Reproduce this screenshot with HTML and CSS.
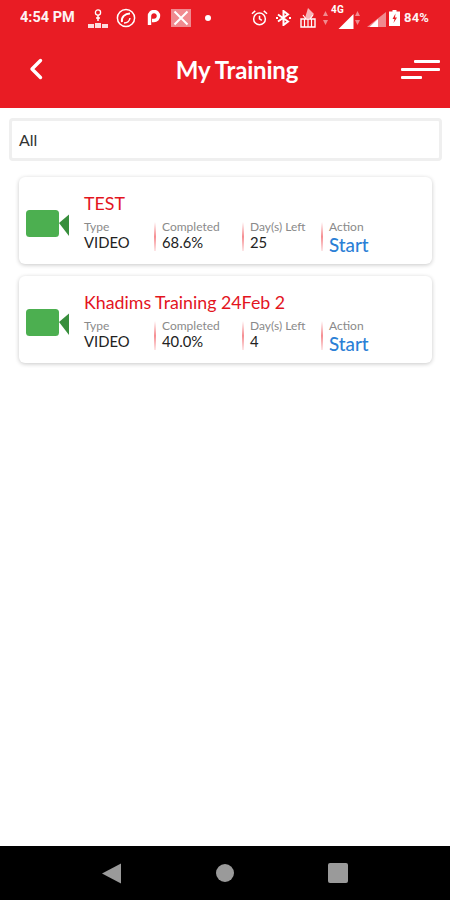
FILE: index.html
```html
<!DOCTYPE html>
<html lang="en">
<head>
<meta charset="utf-8">
<title>My Training</title>
<link rel="stylesheet" href="styles.css">
</head>
<body>
<div class="app">
  <header class="header">
    <div class="status">
      <div class="status-left">
        <span class="time">4:54 PM</span>
        <svg class="si net" viewBox="0 0 20 20"><circle cx="10" cy="4.500" r="2.600" fill="none" stroke="#fff" stroke-width="1.300"/><path d="M10 7v6M8 10h4" stroke="#fff" stroke-width="1.500"/><path d="M0 16h6v4H0zM7 15h6v5H7zM14 16h6v4h-6z" fill="#fff" fill-opacity=".85"/></svg>
        <svg class="si circ" viewBox="0 0 20 20"><circle cx="10" cy="10" r="8.600" fill="none" stroke="#fff" stroke-width="1.500"/><path d="M6 14c-1-5 3-8.500 8-8.500" fill="none" stroke="#fff" stroke-width="2"/><path d="M8 15c3 0 5.500-2 6-5" fill="none" stroke="#fff" stroke-width="1.500"/></svg>
        <svg class="si pp" viewBox="0 0 14 16"><path d="M2.500 15V6a4.500 4.500 0 1 1 4.500 4.500H5" fill="none" stroke="#fff" stroke-width="3.400"/></svg>
        <svg class="si xb" viewBox="0 0 20 18"><rect width="20" height="18" fill="#f08a8f"/><path d="M3.500 2.500l13 13M16.500 2.500l-13 13" stroke="#fff" stroke-width="2"/></svg>
        <span class="dot"></span>
      </div>
      <div class="status-right">
        <svg class="si alarm" viewBox="0 0 18 18"><circle cx="9" cy="10" r="6.200" fill="none" stroke="#fff" stroke-width="1.600"/><path d="M9 6.500V10l2.500 1.500M1 4.500L4.500 1.500M17 4.500l-3.500-3" fill="none" stroke="#fff" stroke-width="1.600"/></svg>
        <svg class="si bt" viewBox="0 0 15 16"><path d="M2 4.500l10 7-4.500 3.500v-14L12 4.500l-10 7" fill="none" stroke="#fff" stroke-width="2"/><path d="M0 8h2M13 8h2" stroke="#fff" stroke-width="2"/></svg>
        <svg class="si wifi" viewBox="0 0 16 20"><path d="M8 0l6 6-3 4H5z" fill="#f7b5b8"/><path d="M1 11h14v8H1z" fill="none" stroke="#fff" stroke-width="1.400"/><path d="M4.500 11v8M8 11v8M11.500 11v8M3 7l3 4M13 7l-3 4" stroke="#fff" stroke-width="1.200"/></svg>
        <svg class="si arrows" viewBox="0 0 5 14"><path d="M2.500 0l2.500 5H0zM2.500 14L0 9h5z" fill="#f08a8f"/></svg>
        <span class="sig4g">
          <span class="lte">4G</span>
          <svg class="si s1" viewBox="0 0 16 16"><path d="M16 0v16H0z" fill="#fff"/></svg>
        </span>
        <svg class="si arrows a2" viewBox="0 0 5 14"><path d="M2.500 0l2.500 5H0zM2.500 14L0 9h5z" fill="#f08a8f"/></svg>
        <svg class="si s2" viewBox="0 0 19 15"><path d="M19 0v15H0z" fill="#f08a8f"/><path d="M11 7v8H2.500z" fill="#fff"/></svg>
        <svg class="si batt" viewBox="0 0 11 16"><path d="M3.500 0h4v1.500H11V16H0V1.500h3.500z" fill="#fff"/><path d="M6.500 3.500L3.500 9h2l-1 4 3.500-5.500H6z" fill="#e91c24"/></svg>
        <span class="pct">84%</span>
      </div>
    </div>
    <div class="titlebar">
      <svg class="back" viewBox="0 0 14 22"><path d="M11.500 2.500L3 11l8.500 8.500" fill="none" stroke="#fff" stroke-width="3.400" stroke-linecap="round" stroke-linejoin="round"/></svg>
      <h1 class="title">My Training</h1>
      <div class="menu">
        <span class="bar b1"></span>
        <span class="bar b2"></span>
        <span class="bar b3"></span>
      </div>
    </div>
  </header>

  <main class="content">
    <div class="select">All</div>

    <section class="card">
      <svg class="cam" viewBox="0 0 43 27"><rect width="33" height="27" rx="3.500" fill="#4caf50"/><path d="M33 13l10-8.500V26z" fill="#388e3c"/></svg>
      <div class="info">
        <div class="name">TEST</div>
        <div class="cols">
          <div class="col c1"><span class="lab">Type</span><span class="val">VIDEO</span></div>
          <div class="col c2"><span class="lab">Completed</span><span class="val">68.6%</span></div>
          <div class="col c3"><span class="lab">Day(s) Left</span><span class="val">25</span></div>
          <div class="col c4"><span class="lab">Action</span><span class="start">Start</span></div>
        </div>
      </div>
    </section>

    <section class="card">
      <svg class="cam" viewBox="0 0 43 27"><rect width="33" height="27" rx="3.500" fill="#4caf50"/><path d="M33 13l10-8.500V26z" fill="#388e3c"/></svg>
      <div class="info">
        <div class="name">Khadims Training 24Feb 2</div>
        <div class="cols">
          <div class="col c1"><span class="lab">Type</span><span class="val">VIDEO</span></div>
          <div class="col c2"><span class="lab">Completed</span><span class="val">40.0%</span></div>
          <div class="col c3"><span class="lab">Day(s) Left</span><span class="val">4</span></div>
          <div class="col c4"><span class="lab">Action</span><span class="start">Start</span></div>
        </div>
      </div>
    </section>
  </main>

  <footer class="navbar">
    <svg class="nav-back" viewBox="0 0 20 21"><path d="M19 0.500v20L0 10.500z" fill="#9a9a9a"/></svg>
    <span class="nav-home"></span>
    <span class="nav-rec"></span>
  </footer>
</div>
</body>
</html>
```
FILE: styles.css
```css
* { box-sizing: border-box; }
html, body { margin: 0; padding: 0; }
body { font-family: Lato, "Liberation Sans", sans-serif; background: #fff; }
.app { width: 450px; height: 900px; display: flex; flex-direction: column; overflow: hidden; }

.header { height: 108px; background: #e91c24; flex: none; color: #fff; }
.status { height: 36px; display: flex; align-items: center; justify-content: space-between; padding: 0 19px 1px 20px; }
.status-left, .status-right { display: flex; align-items: center; }
.si { display: block; flex: none; }
.time { font: 700 14.500px Roboto, sans-serif; width: 68px; white-space: nowrap; opacity: .95; }
.net { width: 20px; height: 20px; }
.circ { width: 20px; height: 20px; margin-left: 8px; }
.pp { width: 14px; height: 16px; margin-left: 11px; }
.xb { width: 20px; height: 18px; margin-left: 10px; }
.dot { width: 6px; height: 6px; border-radius: 50%; background: #fff; margin-left: 14px; }
.alarm { width: 17px; height: 18px; }
.bt { width: 15px; height: 16px; margin-left: 8px; }
.wifi { width: 16px; height: 20px; margin-left: 9px; }
.arrows { width: 5px; height: 14px; margin-left: 7px; }
.a2 { margin-left: 1px; }
.sig4g { display: flex; width: 23px; height: 20px; margin-left: 3px; position: relative; }
.lte { font: 700 10px Roboto, sans-serif; line-height: 10px; margin-top: -3px; letter-spacing: .2px; }
.s1 { width: 16px; height: 15px; position: absolute; right: 0; bottom: -1px; }
.s2 { width: 19px; height: 15px; margin: 3px 0 0 7px; }
.batt { width: 11px; height: 16px; margin-left: 3px; }
.pct { font: 700 13px Roboto, sans-serif; margin-left: 4px; width: 27px; letter-spacing: .2px; white-space: nowrap; opacity: .95; }

.titlebar { height: 66px; display: flex; align-items: center; justify-content: space-between; padding: 0 10px 0 29px; }
.back { width: 14px; height: 22px; }
.title { margin: 0 0 0 30px; font: 700 24px Lato, sans-serif; letter-spacing: -.2px; }
.menu { width: 39px; height: 19px; display: flex; flex-direction: column; align-items: flex-end; gap: 5px; }
.bar { display: block; height: 3px; background: #fff; border-radius: 1px; }
.b1 { width: 26px; }
.b2 { width: 39px; }
.b3 { width: 21px; align-self: flex-start; }

.content { flex: 1; padding: 10px 8px 0 9px; display: flex; flex-direction: column; }
.select { height: 43px; border: 3px solid #efefef; border-radius: 4px; padding: 0 7px; display: flex; align-items: center; font-size: 16px; color: #333; }

.card { height: 87px; margin: 16px 10px 0 10px; background: #fff; border-radius: 6px; box-shadow: 0 1px 4px rgba(0,0,0,.22); display: flex; align-items: center; padding: 0 0 0 7px; }
.card + .card { margin-top: 12px; }
.cam { width: 43px; height: 27px; flex: none; margin-top: 6px; }
.info { margin-left: 15px; flex: 1; display: flex; flex-direction: column; padding-top: 1px; }
.name { font-size: 17.800px; line-height: 22px; color: #e3141e; white-space: nowrap; }
.cols { display: flex; margin-top: 5px; }
.col { display: flex; flex-direction: column; height: 32px; border-left: 2px solid transparent; padding-left: 6px; }
.c1 { width: 70px; padding-left: 0; border-left: 0; }
.c2 { width: 88px; }
.c3 { width: 79px; }
.c4 { width: 70px; }
.c2, .c3, .c4 { border-image: linear-gradient(to bottom, rgba(236,28,36,0) 12%, rgba(236,28,36,.5) 55%, rgba(236,28,36,.08)) 1; }
.lab { font-size: 12px; line-height: 15px; color: #8a8a8a; white-space: nowrap; }
.val { font-size: 14.800px; line-height: 16px; color: #222; white-space: nowrap; }
.start { font-size: 18.800px; line-height: 21px; color: #2b80d6; font-weight: 500; white-space: nowrap; }

.navbar { height: 54px; flex: none; background: #000; display: flex; align-items: center; padding: 0 0 0 102px; }
.nav-back { width: 20px; height: 21px; }
.nav-home { width: 18px; height: 18px; border-radius: 50%; background: #9a9a9a; margin-left: 94px; }
.nav-rec { width: 20px; height: 20px; border-radius: 2px; background: #9a9a9a; margin-left: 94px; }
```
